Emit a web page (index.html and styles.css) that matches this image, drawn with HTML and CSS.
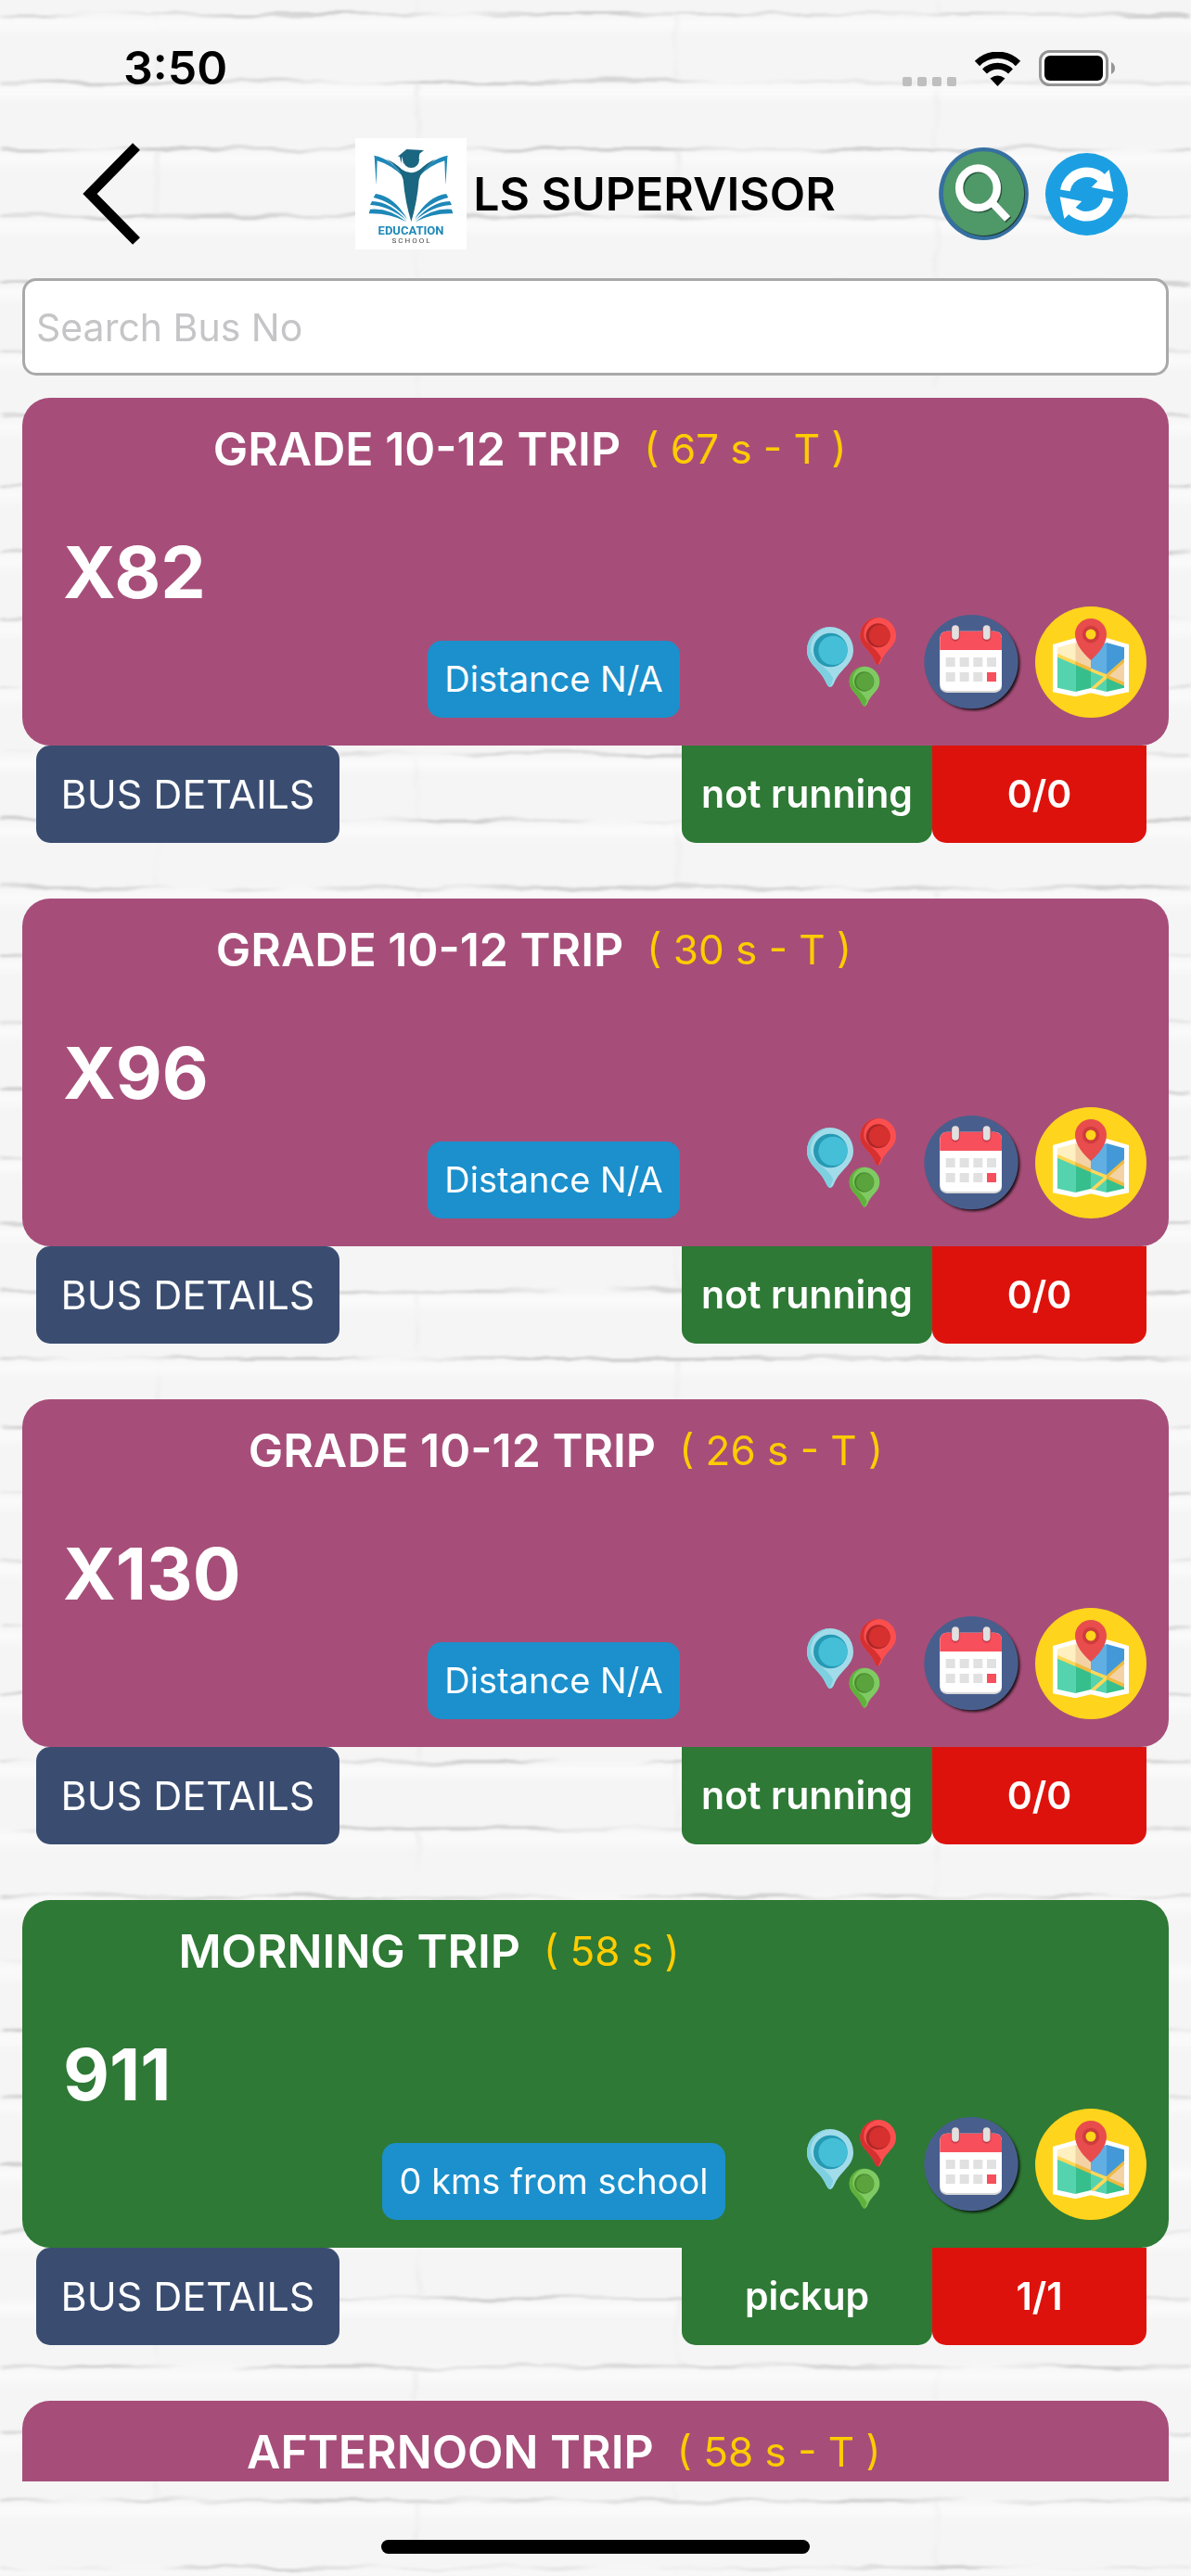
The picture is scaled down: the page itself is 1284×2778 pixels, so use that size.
FILE: index.html
```
<!DOCTYPE html>
<html lang="en">
<head>
    <meta charset="UTF-8">
    <meta name="viewport" content="width=device-width">
    <title>LS SUPERVISOR</title>
    <link rel="stylesheet" href="styles.css">
</head>
<body>
<!-- brick wall -->
<svg class="wall" aria-hidden="true">
    <defs>
        <pattern id="bricks" width="560" height="144.9" patternUnits="userSpaceOnUse" y="14">
            <path d="M0 2H560M0 74.4H560" stroke="#d2d2d2" stroke-width="4"/>
            <path d="M170 4V72M450 76V144" stroke="#ececec" stroke-width="4"/>
        </pattern>
        <pattern id="shine" width="560" height="72.45" patternUnits="userSpaceOnUse" y="14">
            <path d="M0 12H560" stroke="#fbfbfb" stroke-width="12"/>
        </pattern>
        <filter id="rough" x="0" y="0" width="100%" height="100%">
            <feTurbulence type="fractalNoise" baseFrequency="0.014 0.03" numOctaves="3" seed="7" result="n"/>
            <feDisplacementMap in="SourceGraphic" in2="n" scale="12" xChannelSelector="R" yChannelSelector="G" result="d"/>
            <feGaussianBlur in="d" stdDeviation="2 1" result="b"/>
            <feTurbulence type="fractalNoise" baseFrequency="0.007 0.02" numOctaves="2" seed="3"/>
            <feColorMatrix values="0 0 0 0 0  0 0 0 0 0  0 0 0 0 0  3 0 0 0 -0.9" result="m"/>
            <feComposite in="b" in2="m" operator="in"/>
        </filter>
        <filter id="soft" x="0" y="0" width="100%" height="100%">
            <feGaussianBlur stdDeviation="0 5"/>
        </filter>
    </defs>
    <rect width="100%" height="100%" fill="#f5f5f5"/>
    <rect width="100%" height="100%" fill="url(#shine)" filter="url(#soft)"/>
    <rect width="100%" height="100%" fill="url(#bricks)" filter="url(#rough)"/>
</svg>

<!-- icons shared by the cards -->
<svg class="sprite" aria-hidden="true">
    <defs>
        <filter id="drop" x="-10%" y="-10%" width="120%" height="120%">
            <feGaussianBlur stdDeviation="4"/>
        </filter>
    </defs>
    <symbol id="pins" viewBox="0 0 360 360">
        <path fill="#a2dcea" d="M93 66a75 75 0 0 1 75 75c0 48-42 58-63 108q-12 24-24 0C60 199 18 189 18 141a75 75 0 0 1 75-75z"/>
        <path fill="#7ed0e0" d="M93 66a75 75 0 0 0-75 75c0 48 42 58 63 108q6 12 12 12l10-28C82 190 30 178 30 138c0-40 26-66 63-72z"/>
        <circle cx="94" cy="141" r="55" fill="#2699b3"/>
        <circle cx="102" cy="142" r="47" fill="#45bfd8"/>
        <path fill="#fb4f4f" d="M248 36a58 58 0 0 1 58 58c0 36-32 44-47 82q-11 22-22 0c-15-38-47-46-47-82a58 58 0 0 1 58-58z"/>
        <path fill="#d63030" d="M248 36a58 58 0 0 0-58 58c0 36 32 44 47 82q5 12 11 12l10-22c-16-36-56-44-56-76 0-28 16-48 46-54z"/>
        <circle cx="248" cy="94" r="39" fill="#b02728"/>
        <circle cx="253" cy="94" r="34" fill="#d6302f"/>
        <path fill="#80ca63" d="M204 194a49 49 0 0 1 49 49c0 31-27 38-40 71q-9 18-18 0c-13-33-40-40-40-71a49 49 0 0 1 49-49z"/>
        <path fill="#5fb13b" d="M204 194a49 49 0 0 0-49 49c0 31 27 38 40 71q4 9 9 9l8-18c-14-32-46-38-46-66 0-24 14-40 38-45z"/>
        <circle cx="203" cy="243" r="32" fill="#4a8a2e"/>
        <circle cx="206" cy="243" r="29" fill="#5aa33d"/>
    </symbol>
    <symbol id="calendar" viewBox="0 0 324 324">
        <circle cx="160" cy="168" r="150" fill="#000" opacity=".85" filter="url(#drop)"/>
        <circle cx="153" cy="161" r="152" fill="#485f8e"/>
        <rect x="52" y="66" width="200" height="195" rx="22" fill="#d8d8d8"/>
        <rect x="52" y="62" width="200" height="193" rx="22" fill="#fff"/>
        <path d="M52 123V84a22 22 0 0 1 22-22h156a22 22 0 0 1 22 22v39z" fill="#f74f5b"/>
        <path d="M102 58v23M203 58v23" stroke="#c93c4a" stroke-width="28" stroke-linecap="round"/>
        <path d="M102 54v24M203 54v24" stroke="#e0e0e0" stroke-width="23" stroke-linecap="round"/>
        <path fill="#e1e1e1" d="M71 147h30v30H71zM116 147h30v30h-30zM160 147h30v30h-30zM204 147h30v30h-30zM71 195h30v30H71zM116 195h30v30h-30zM160 195h30v30h-30z"/>
        <path fill="#f74f5b" d="M204 195h30v30h-30z"/>
    </symbol>
    <symbol id="map" viewBox="0 0 360 360">
        <circle cx="180" cy="180" r="180" fill="#ffd41c"/>
        <path fill="#fff" d="M57 123l73-21 50 16 51-16 72 21v154l-72 15-51-12-50 12-73-15z"/>
        <path fill="#fff0c2" d="M72 133l58-16v70l-58-29z"/>
        <path fill="#f3d3a5" d="M130 117l50 14v74l-50-22zM231 224l57-54v79z"/>
        <path fill="#55d3ae" d="M72 158l58 26v92l-58-13zM180 203l51 21v52l-51-12z"/>
        <path fill="#36bf8c" d="M130 183l50 22v59l-50 12zM231 224l57 25v14l-57 13z"/>
        <path fill="#61aee3" d="M180 131l51-14v107l-51-24z"/>
        <path fill="#4399d8" d="M231 117l57 16v39l-57 52z"/>
        <path fill="#ffd858" d="M72 152l58 25v12l-58-25zM180 200l51 20v12l-51-21zM231 219v15l-38 33-13-3z"/>
        <path fill="#efbb40" d="M130 177l50 22v12l-50-22zM231 218l57-50v13l-49 43 49 21v12l-57-25z"/>
        <path fill="#e84c4c" d="M180 39a51 51 0 0 1 51 51c0 32-28 64-51 84-23-20-51-52-51-84a51 51 0 0 1 51-51z"/>
        <circle cx="180" cy="90" r="22" fill="#ffd41c" stroke="#ce3c3c" stroke-width="11"/>
    </symbol>
</svg>

<div class="app">
    <div class="status-bar">
        <span class="time">3:50</span>
        <div class="status-icons">
            <svg class="dots" viewBox="0 0 58 10"><path fill="#bfbfbf" d="M2 0h6q2 0 2 2v6q0 2-2 2H2q-2 0-2-2V2q0-2 2-2zM18 0h6q2 0 2 2v6q0 2-2 2h-6q-2 0-2-2V2q0-2 2-2zM34 0h6q2 0 2 2v6q0 2-2 2h-6q-2 0-2-2V2q0-2 2-2zM50 0h6q2 0 2 2v6q0 2-2 2h-6q-2 0-2-2V2q0-2 2-2z"/></svg>
            <svg class="wifi" viewBox="0 0 51 37">
                <path d="M3.500 12.500a31 31 0 0 1 44 0" fill="none" stroke="#000" stroke-width="7.500"/>
                <path d="M11.500 21a20 20 0 0 1 28 0" fill="none" stroke="#000" stroke-width="7"/>
                <path d="M25.500 37l-8-8.500q8-6 16 0z"/>
            </svg>
            <svg class="battery" viewBox="0 0 82 39">
                <rect x="1.500" y="1.500" width="72" height="36" rx="10" fill="#fff" stroke="#959595" stroke-width="3"/>
                <rect x="6" y="6" width="63" height="27" rx="6"/>
                <path d="M78 13q4 2 4 6.500t-4 6.500z" fill="#959595"/>
            </svg>
        </div>
    </div>

    <header class="header">
        <button class="back" aria-label="Back">
            <svg viewBox="0 0 62 110"><path d="M58 4L8 55l50 51" fill="none" stroke="#000" stroke-width="11"/></svg>
        </button>
        <div class="brand">
            <svg class="logo" viewBox="0 0 360 360">
                <rect width="360" height="360" fill="#fff"/>
                <g id="book" fill="#1e88b8">
                    <path d="M60 56Q118 66 157 126 116 86 71 73L68 152 62 60z"/>
                    <path d="M66 180q60 8 102 82Q120 206 59 192z"/>
                    <path d="M54 204q60 2 114 64-55-48-120-52z"/>
                    <path d="M48 230q62-6 118 41-55-29-122-27z"/>
                </g>
                <use href="#book" transform="matrix(-1 0 0 1 360 0)"/>
                <path fill="#1b6680" d="M101 68q26 10 50 33 30 22 60-1 22-22 48-32-46 36-53 66-6 74-25 136-19-60-26-136-7-34-54-66z"/>
                <circle cx="181" cy="70" r="26" fill="#1b6680"/>
                <path fill="#1b6680" d="M137 60l29-24 56 3-14 11-2 14-46-7-4 28-4-26-4 22-4-22z"/>
                <text class="logo-name" x="180" y="312">EDUCATION</text>
                <text class="logo-sub" x="180" y="338">S C H O O L</text>
            </svg>
            <h1>LS SUPERVISOR</h1>
        </div>
        <div class="actions">
            <button aria-label="Search">
                <svg class="search-icon" viewBox="0 0 290 300">
                    <ellipse cx="145" cy="150" rx="145" ry="150" fill="#3670a0"/>
                    <ellipse cx="148" cy="152" rx="131" ry="136" fill="#1d3d38"/>
                    <ellipse cx="145" cy="149" rx="131" ry="136" fill="#4f9868"/>
                    <g fill="none" stroke="#2a5a40" stroke-width="25" transform="translate(4 4)">
                        <ellipse cx="127" cy="131" rx="61" ry="64"/>
                        <path d="M170 176l52 55"/>
                    </g>
                    <g fill="none" stroke="#fff" stroke-width="25">
                        <ellipse cx="127" cy="131" rx="61" ry="64"/>
                        <path d="M170 176l52 55"/>
                    </g>
                </svg>
            </button>
            <button aria-label="Refresh">
                <svg class="refresh-icon" viewBox="0 0 267 267">
                    <circle cx="133.500" cy="133.500" r="133.500" fill="#1b9fe2"/>
                    <g id="arrow">
                        <path d="M64 121a71 71 0 0 1 120-38" fill="none" stroke="#fff" stroke-width="32"/>
                        <path d="M206 54l14 71-71-14z" fill="#fff"/>
                    </g>
                    <use href="#arrow" transform="rotate(180 133.500 133.500)"/>
                </svg>
            </button>
        </div>
    </header>

    <input class="search" type="text" placeholder="Search Bus No" aria-label="Search Bus No">

    <main class="list">
        <section class="trip">
            <div class="card">
                <strong class="bus-no">X82</strong>
                <h2>GRADE 10-12 TRIP <span>( 67 s - T )</span></h2>
                <div class="card-bottom">
                    <div class="distance"><span>Distance N/A</span></div>
                    <button aria-label="Stops"><svg class="icon"><use href="#pins"/></svg></button>
                    <button aria-label="Calendar"><svg class="icon icon-calendar"><use href="#calendar"/></svg></button>
                    <button aria-label="Map"><svg class="icon"><use href="#map"/></svg></button>
                </div>
            </div>
            <div class="tabs">
                <button class="details">BUS DETAILS</button>
                <span class="state">not running</span>
                <span class="count">0/0</span>
            </div>
        </section>

        <section class="trip">
            <div class="card">
                <strong class="bus-no">X96</strong>
                <h2>GRADE 10-12 TRIP <span>( 30 s - T )</span></h2>
                <div class="card-bottom">
                    <div class="distance"><span>Distance N/A</span></div>
                    <button aria-label="Stops"><svg class="icon"><use href="#pins"/></svg></button>
                    <button aria-label="Calendar"><svg class="icon icon-calendar"><use href="#calendar"/></svg></button>
                    <button aria-label="Map"><svg class="icon"><use href="#map"/></svg></button>
                </div>
            </div>
            <div class="tabs">
                <button class="details">BUS DETAILS</button>
                <span class="state">not running</span>
                <span class="count">0/0</span>
            </div>
        </section>

        <section class="trip">
            <div class="card">
                <strong class="bus-no">X130</strong>
                <h2>GRADE 10-12 TRIP <span>( 26 s - T )</span></h2>
                <div class="card-bottom">
                    <div class="distance"><span>Distance N/A</span></div>
                    <button aria-label="Stops"><svg class="icon"><use href="#pins"/></svg></button>
                    <button aria-label="Calendar"><svg class="icon icon-calendar"><use href="#calendar"/></svg></button>
                    <button aria-label="Map"><svg class="icon"><use href="#map"/></svg></button>
                </div>
            </div>
            <div class="tabs">
                <button class="details">BUS DETAILS</button>
                <span class="state">not running</span>
                <span class="count">0/0</span>
            </div>
        </section>

        <section class="trip">
            <div class="card active">
                <strong class="bus-no">911</strong>
                <h2>MORNING TRIP <span>( 58 s )</span></h2>
                <div class="card-bottom">
                    <div class="distance"><span>0 kms from school</span></div>
                    <button aria-label="Stops"><svg class="icon"><use href="#pins"/></svg></button>
                    <button aria-label="Calendar"><svg class="icon icon-calendar"><use href="#calendar"/></svg></button>
                    <button aria-label="Map"><svg class="icon"><use href="#map"/></svg></button>
                </div>
            </div>
            <div class="tabs">
                <button class="details">BUS DETAILS</button>
                <span class="state">pickup</span>
                <span class="count">1/1</span>
            </div>
        </section>

        <section class="trip">
            <div class="card">
                <strong class="bus-no bus-no-empty"></strong>
                <h2>AFTERNOON TRIP <span>( 58 s - T )</span></h2>
            </div>
        </section>
    </main>

    <div class="home"><div class="home-bar"></div></div>
</div>
</body>
</html>
```

FILE: styles.css
```
* {
    box-sizing: border-box;
}

body {
    margin: 0;
    font-family: Inter, "Liberation Sans", sans-serif;
    background: #f5f5f5;
    color: #000;
}

button {
    padding: 0;
    border: 0;
    background: none;
    font: inherit;
    color: inherit;
}

svg {
    display: block;
}

.wall {
    position: fixed;
    top: 0;
    left: 0;
    width: 100%;
    height: 100%;
    z-index: -1;
}

.sprite {
    position: absolute;
    width: 0;
    height: 0;
}

.app {
    display: flex;
    flex-direction: column;
    height: 100vh;
}

/* status bar */
.status-bar {
    display: flex;
    justify-content: space-between;
    align-items: center;
    height: 132px;
    padding: 14px 82px 0 133px;
}

.time {
    font-size: 50px;
    font-weight: 600;
}

.status-icons {
    display: flex;
    align-items: flex-end;
    gap: 19px;
}

.dots {
    width: 58px;
    height: 10px;
}

.wifi {
    width: 51px;
    height: 37px;
}

.battery {
    width: 82px;
    height: 39px;
}

/* header */
.header {
    display: grid;
    grid-template-columns: 1fr auto 1fr;
    align-items: center;
    height: 154px;
    padding: 0 68px;
}

.back {
    justify-self: start;
    padding-left: 21px;
}

.back svg {
    width: 62px;
    height: 110px;
}

.brand {
    display: flex;
    align-items: center;
    gap: 7px;
}

.logo {
    width: 120px;
    height: 120px;
}

.logo-name {
    font: 700 39px Roboto, sans-serif;
    fill: #1e88b8;
    text-anchor: middle;
}

.logo-sub {
    font: 400 24px Roboto, sans-serif;
    fill: #444;
    text-anchor: middle;
}

h1 {
    margin: 0;
    font-size: 50px;
    font-weight: 600;
}

.actions {
    display: flex;
    justify-content: flex-end;
    align-items: center;
    gap: 18px;
}

.search-icon {
    width: 97px;
    height: 100px;
}

.refresh-icon {
    width: 89px;
    height: 89px;
}

.search {
    flex: none;
    height: 105px;
    margin: 14px 24px 24px;
    padding: 0 12px;
    border: 3px solid #a9a9a9;
    border-radius: 15px;
    background: #fff;
    font: 400 41px Inter, "Liberation Sans", sans-serif;
}

.search::placeholder {
    color: #c5c5c7;
}

/* trips */
.list {
    flex: 1;
    min-height: 0;
    overflow: hidden;
    padding: 0 24px;
}

.trip {
    margin-bottom: 60px;
}

.card {
    display: grid;
    grid-template-columns: auto 1fr;
    grid-template-rows: 110px 1fr;
    min-height: 375px;
    border-radius: 30px;
    background: #a64e79;
    color: #fff;
}

.card.active {
    background: #2e7935;
}

.bus-no {
    grid-column: 1;
    grid-row: 1 / 3;
    align-self: center;
    padding-left: 44px;
    font-size: 77px;
    font-weight: 700;
}

/* keeps the title in line while the bus has no number */
.bus-no-empty {
    width: 234px;
}

h2 {
    grid-column: 2;
    grid-row: 1;
    display: flex;
    align-items: center;
    gap: 25px;
    margin: 0;
    padding-left: 8px;
    font-size: 50px;
    font-weight: 600;
}

h2 span {
    font-size: 44px;
    font-weight: 400;
    color: #fc0;
}

.card-bottom {
    grid-column: 1 / 3;
    grid-row: 2;
    align-self: end;
    display: flex;
    align-items: center;
    gap: 12px;
    padding: 0 24px 30px 0;
}

.distance {
    flex: 1;
    align-self: flex-end;
    padding-left: 318px;
    text-align: center;
}

.distance span {
    display: inline-block;
    padding: 0 18px;
    border-radius: 15px;
    background: #1b90cc;
    font-size: 38px;
    line-height: 83px;
    vertical-align: bottom;
}

.icon {
    width: 120px;
    height: 120px;
}

.icon-calendar {
    width: 108px;
    height: 108px;
}

.tabs {
    display: flex;
    padding: 0 24px 0 15px;
    line-height: 105px;
    color: #fff;
    text-align: center;
}

.details {
    width: 327px;
    margin-right: auto;
    border-radius: 15px;
    background: #3a4d71;
    font-size: 43px;
}

.state,
.count {
    border-radius: 0 0 15px 15px;
    font-size: 41px;
    font-weight: 600;
}

.state {
    width: 270px;
    background: #2e7935;
}

.count {
    width: 231px;
    background: #de120c;
}

/* home indicator */
.home {
    display: flex;
    justify-content: center;
    align-items: flex-end;
    height: 102px;
    padding-bottom: 24px;
}

.home-bar {
    width: 36%;
    height: 15px;
    border-radius: 8px;
    background: #000;
}
```
